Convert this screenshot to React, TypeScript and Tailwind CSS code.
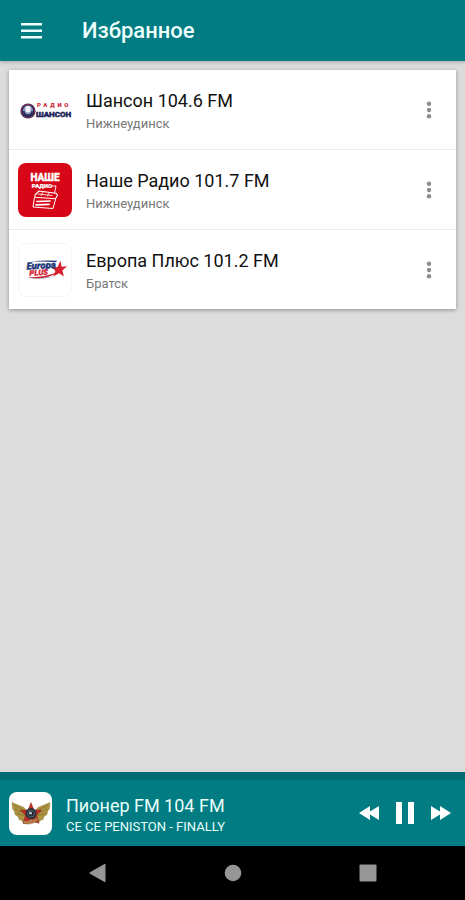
import type { ReactNode } from "react";

function ShansonLogo() {
  return (
    <svg viewBox="0 0 54 54" className="size-[54px]" aria-hidden="true">
      <circle cx="10" cy="28" r="7.6" fill="#1d2559" />
      <circle cx="10" cy="28" r="6.6" fill="none" stroke="#b9334a" strokeWidth="0.8" />
      <circle cx="10" cy="27.6" r="5" fill="#8e99bd" />
      <path d="M7.500 23.500q2.500-1.200 5 0v5q-2.500 2-5 0z" fill="#f2f3f8" />
      <path d="M6 28q0 4 4 4t4-4M10 32v2.500" fill="none" stroke="#1d2559" strokeWidth="1.300" />
      <text x="19" y="24" fontSize="6" fontWeight="900" fill="#cf2233" letterSpacing="2.800">РАДИО</text>
      <text x="18" y="34" fontSize="8" fontWeight="700" fill="#1b2257" stroke="#1b2257" strokeWidth="0.600">ШАНСОН</text>
    </svg>
  );
}

function NasheLogo() {
  return (
    <svg viewBox="0 0 54 54" className="size-[54px] rounded-lg" aria-hidden="true">
      <rect width="54" height="54" fill="#d80718" />
      <text x="27" y="17.500" textAnchor="middle" fontSize="10" fontWeight="900" fill="#fff" stroke="#fff" strokeWidth="0.300">НАШЕ</text>
      <text x="24" y="25" textAnchor="middle" fontSize="6" fontWeight="900" fill="#fff" stroke="#fff" strokeWidth="0.200">РАДИО</text>
      <g fill="none" stroke="#fff" strokeLinecap="round" strokeLinejoin="round">
        <path d="M34 23h4l-1.500 7" strokeWidth="0.900" />
        <path d="M17 32l4-4 17 2.200 1.500 2-2 3.500-20.500-1.500z" strokeWidth="1.100" />
        <path d="M16.500 34.500l-1.500 9.500 20 1.500 2.500-9" strokeWidth="1" />
        <path d="M20 31l14 1.500M25 29l-2 3.500M31 30l-1.500 3" strokeWidth="0.800" />
        <path d="M19 38.500l13-.500M18 41.800l13-.500" strokeWidth="1.700" />
      </g>
    </svg>
  );
}

function EuropaLogo() {
  return (
    <svg viewBox="0 0 54 54" className="size-[54px] rounded-lg border border-[#f5f5f5]" aria-hidden="true">
      <path d="M43 17.500l1.300 6 5.700-.300-5 4.200 1.600 6.300-5-3.400-6 3.400 2.200-6-3.800-3.200 6-.500z" fill="#d8202e" />
      <path d="M9 35q21 2.500 31-6-11 4.500-20 5z" fill="#cf2030" />
      <path d="M12 18.500q14-2 28-1l-2 1.500q-13-1.500-26-.500zM9 34.500q18 2.500 30-1.500-15 5-30 1.500z" fill="#203778" />
      <text x="8" y="26.500" transform="rotate(-3 8 26)" fontSize="10" fontWeight="900" fontStyle="italic" fill="#203778" stroke="#203778" strokeWidth="0.400">Europa</text>
      <text x="11" y="33" transform="rotate(-3 11 33)" fontSize="8" fontWeight="900" fontStyle="italic" fill="#d8202e" stroke="#d8202e" strokeWidth="0.300">PLUS</text>
    </svg>
  );
}

function PioneerLogo() {
  return (
    <svg viewBox="0 0 43 43" className="size-[43px] shrink-0 rounded-lg bg-white" aria-hidden="true">
      <g fill="#ad9442" stroke="#7d6826" strokeWidth="0.400">
        <path d="M3 10.500l12 5 5 6-2 9-4-.500-2-2-2-.500-1-3-3-2-.500-3-2-3z" />
        <path d="M41 10.500l-12 5-5 6 2 9 4-.500 2-2 2-.500 1-3 3-2 .500-3 2-3z" />
      </g>
      <path d="M5 13l11 6M6 17l10 4.500M8 21l8 3M39 13l-11 6M38 17l-10 4.500M36 21l-8 3" stroke="#7b6527" strokeWidth="0.600" />
      <path d="M22 10.500l3 7.500 7.500.300-5 5 2.500 8.200-8-4-8 4 2.500-8.200-5-5L19 18z" fill="#c42c28" stroke="#792018" strokeWidth="0.400" />
      <circle cx="22" cy="21.500" r="5.500" fill="#262b33" />
      <circle cx="22" cy="21.500" r="3.600" fill="none" stroke="#6b7480" strokeWidth="0.800" />
      <circle cx="21.500" cy="21" r="1.500" fill="#bcc4cc" />
      <path d="M14 28.500q8 1.500 14-3l1 3q-7 5-14.500 3z" fill="#b97b45" stroke="#754320" strokeWidth="0.400" />
    </svg>
  );
}

function Station({ name, city, logo }: { name: string; city: string; logo: ReactNode }) {
  return (
    <li className="flex h-20 items-center border-b border-[#ebebeb] pl-[9px] pr-[11px] last:h-[79px] last:border-b-0">
      <div className="shrink-0">{logo}</div>
      <div className="ml-3.5 min-w-0 flex-1 pt-1">
        <h2 className="truncate text-lg leading-6 text-[#111]">{name}</h2>
        <p className="truncate text-[13px] leading-[22px] text-[#777]">{city}</p>
      </div>
      <button type="button" aria-label={`Меню: ${name}`} className="flex h-10 w-8 items-center justify-center">
        <svg viewBox="0 0 6 18" className="h-[18px] w-1.5" fill="#8c8c8c">
          <circle cx="3" cy="2.700" r="2.200" />
          <circle cx="3" cy="9" r="2.200" />
          <circle cx="3" cy="15.300" r="2.200" />
        </svg>
      </button>
    </li>
  );
}

export default function App() {
  return (
    <div className="flex min-h-screen flex-col bg-[#dcdcdc] font-['Roboto',sans-serif]">
      <header className="flex h-[61px] items-center bg-[#007c82] pl-[21px] text-[#effffd] shadow-[0_1px_4px_rgba(0,0,0,0.25)]">
        <button type="button" aria-label="Открыть меню" className="flex h-10 items-center">
          <svg viewBox="0 0 21 16" className="h-4 w-[21px]" fill="currentColor">
            <path d="M0 0h21v2.500H0zM0 6.500h21V9H0zM0 13h21v2.500H0z" />
          </svg>
        </button>
        <h1 className="ml-10 text-[22px] font-medium leading-8">Избранное</h1>
      </header>

      <main className="flex-1 px-[9px] pt-[9px]">
        <ul className="bg-white shadow-[0_1px_4px_rgba(0,0,0,0.35)]">
          <Station name="Шансон 104.6 FM" city="Нижнеудинск" logo={<ShansonLogo />} />
          <Station name="Наше Радио 101.7 FM" city="Нижнеудинск" logo={<NasheLogo />} />
          <Station name="Европа Плюс 101.2 FM" city="Братск" logo={<EuropaLogo />} />
        </ul>
      </main>

      <footer>
        <div className="h-2 bg-[#006c71]" />
        <section aria-label="Плеер" className="flex h-[66px] items-center bg-[#007c82] pl-[9px] pr-3.5 text-[#e9fffc]">
          <PioneerLogo />
          <div className="ml-3.5 min-w-0 flex-1 pt-1">
            <p className="truncate text-lg leading-6">Пионер FM 104 FM</p>
            <p className="truncate text-[13px] leading-[18px]">CE CE PENISTON - FINALLY</p>
          </div>
          <div className="flex items-center gap-[17px] text-white">
            <button type="button" aria-label="Назад">
              <svg viewBox="0 0 20 14" className="h-3.5 w-5" fill="currentColor">
                <path d="M0 7L11 0v5.500L20 0v14l-9-5.500V14z" />
              </svg>
            </button>
            <button type="button" aria-label="Пауза">
              <svg viewBox="0 0 18 22" className="h-[22px] w-[18px]" fill="currentColor">
                <path d="M0 0h6v22H0zM12 0h6v22h-6z" />
              </svg>
            </button>
            <button type="button" aria-label="Вперёд">
              <svg viewBox="0 0 20 14" className="h-3.5 w-5" fill="currentColor">
                <path d="M20 7L9 0v5.500L0 0v14l9-5.500V14z" />
              </svg>
            </button>
          </div>
        </section>
        <nav aria-label="Система" className="grid h-[54px] grid-cols-3 items-center bg-black px-[30px] text-[#969696]">
          <button type="button" aria-label="Назад" className="flex justify-center">
            <svg viewBox="0 0 18 18" className="size-[18px]" fill="currentColor">
              <path d="M1 8.300L15.500 0q1-.300 1 .700v16.600q0 1-1 .700L1 9.700q-1-.700 0-1.400z" />
            </svg>
          </button>
          <button type="button" aria-label="Домой" className="flex justify-center">
            <svg viewBox="0 0 18 18" className="size-[18px]" fill="currentColor">
              <circle cx="9" cy="9" r="8.300" />
            </svg>
          </button>
          <button type="button" aria-label="Недавние" className="flex justify-center">
            <svg viewBox="0 0 18 18" className="size-[18px]" fill="currentColor">
              <rect x="0.500" y="0.500" width="17" height="17" rx="1" />
            </svg>
          </button>
        </nav>
      </footer>
    </div>
  );
}
